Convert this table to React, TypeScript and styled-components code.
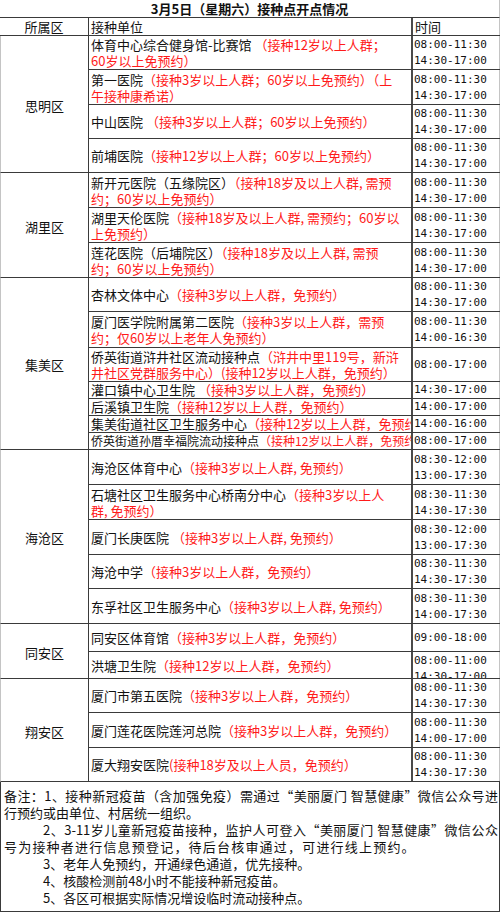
import styled, { createGlobalStyle } from "styled-components";

type Line = [string, string];

interface Entry {
  h: number;
  lines: Line[];
  times: string[];
  small?: boolean;
}

interface District {
  name: string;
  entries: Entry[];
}

const AM_PM = ["08:00-11:30", "14:30-17:00"];

const districts: District[] = [
  {
    name: "思明区",
    entries: [
      {
        h: 34,
        lines: [
          ["体育中心综合健身馆-比赛馆 ", "（接种12岁以上人群；"],
          ["", "60岁以上免预约）"],
        ],
        times: AM_PM,
      },
      {
        h: 35,
        lines: [
          ["第一医院", "（接种3岁以上人群；60岁以上免预约）（上"],
          ["", "午接种康希诺）"],
        ],
        times: AM_PM,
      },
      {
        h: 34,
        lines: [["中山医院 ", "（接种3岁以上人群；60岁以上免预约）"]],
        times: AM_PM,
      },
      {
        h: 34,
        lines: [["前埔医院", "（接种12岁以上人群；60岁以上免预约）"]],
        times: AM_PM,
      },
    ],
  },
  {
    name: "湖里区",
    entries: [
      {
        h: 35,
        lines: [
          ["新开元医院（五缘院区）", "（接种18岁及以上人群, 需预"],
          ["", "约；60岁以上免预约）"],
        ],
        times: AM_PM,
      },
      {
        h: 35,
        lines: [
          ["湖里天伦医院", "（接种18岁及以上人群, 需预约；60岁以"],
          ["", "上免预约）"],
        ],
        times: AM_PM,
      },
      {
        h: 35,
        lines: [
          ["莲花医院（后埔院区）", "（接种18岁及以上人群, 需预"],
          ["", "约；60岁以上免预约）"],
        ],
        times: AM_PM,
      },
    ],
  },
  {
    name: "集美区",
    entries: [
      {
        h: 34,
        lines: [["杏林文体中心", "（接种3岁以上人群，免预约）"]],
        times: AM_PM,
      },
      {
        h: 36,
        lines: [
          ["厦门医学院附属第二医院", "（接种3岁以上人群，需预"],
          ["", "约；仅60岁以上老年人免预约）"],
        ],
        times: ["08:00-11:30", "14:00-16:30"],
      },
      {
        h: 34,
        lines: [
          ["侨英街道浒井社区流动接种点", "（浒井中里119号，新浒"],
          ["", "井社区党群服务中心）(接种12岁以上人群，免预约）"],
        ],
        times: ["08:00-17:00"],
      },
      {
        h: 17,
        lines: [["灌口镇中心卫生院 ", "（接种3岁以上人群，免预约）"]],
        times: ["14:30-17:00"],
      },
      {
        h: 17,
        lines: [["后溪镇卫生院", "（接种12岁以上人群，免预约）"]],
        times: ["14:00-17:00"],
      },
      {
        h: 17,
        lines: [["集美街道社区卫生服务中心", "（接种12岁以上人群，免预约）"]],
        times: ["14:00-16:00"],
      },
      {
        h: 17,
        small: true,
        lines: [["侨英街道孙厝幸福院流动接种点", "（接种12岁以上人群，免预约）"]],
        times: ["08:00-17:00"],
      },
    ],
  },
  {
    name: "海沧区",
    entries: [
      {
        h: 35,
        lines: [["海沧区体育中心", "（接种3岁以上人群, 免预约）"]],
        times: ["08:30-12:00", "13:00-17:30"],
      },
      {
        h: 35,
        lines: [
          ["石塘社区卫生服务中心桥南分中心", "（接种3岁以上人"],
          ["", "群, 免预约）"],
        ],
        times: ["08:30-11:30", "14:30-17:30"],
      },
      {
        h: 35,
        lines: [["厦门长庚医院 ", "（接种3岁以上人群, 免预约）"]],
        times: ["08:30-12:00", "13:00-17:30"],
      },
      {
        h: 34,
        lines: [["海沧中学", "（接种3岁以上人群，免预约）"]],
        times: ["08:30-11:30", "14:30-17:30"],
      },
      {
        h: 35,
        lines: [["东孚社区卫生服务中心", "（接种3岁以上人群, 免预约）"]],
        times: ["08:30-11:30", "14:00-17:30"],
      },
    ],
  },
  {
    name: "同安区",
    entries: [
      {
        h: 28,
        lines: [["同安区体育馆", "（接种3岁以上人群，免预约）"]],
        times: ["09:00-18:00"],
      },
      {
        h: 27,
        lines: [["洪塘卫生院", "（接种12岁以上人群，免预约）"]],
        times: ["08:00-11:00", "14:30-17:00"],
      },
    ],
  },
  {
    name: "翔安区",
    entries: [
      {
        h: 34,
        lines: [["厦门市第五医院", "（接种3岁以上人群，免预约）"]],
        times: ["08:00-11:30", "14:30-17:30"],
      },
      {
        h: 35,
        lines: [["厦门莲花医院莲河总院", "（接种3岁以上人群，免预约）"]],
        times: ["08:00-11:30", "14:00-17:00"],
      },
      {
        h: 34,
        lines: [["厦大翔安医院", "(接种18岁及以上人员，免预约）"]],
        times: ["08:00-11:30", "14:30-17:30"],
      },
    ],
  },
];

const notes: { text: string; indent?: boolean; full?: boolean; spread?: number }[] = [
  { text: "备注：1、接种新冠疫苗（含加强免疫）需通过“美丽厦门 智慧健康”微信公众号进", full: true },
  { text: "行预约或由单位、村居统一组织。" },
  { text: "2、3-11岁儿童新冠疫苗接种，监护人可登入“美丽厦门 智慧健康”微信公众", indent: true, full: true },
  { text: "号为接种者进行信息预登记，待后台核审通过，可进行线上预约。", spread: 1.2 },
  { text: "3、老年人免预约，开通绿色通道，优先接种。", indent: true },
  { text: "4、核酸检测前48小时不能接种新冠疫苗。", indent: true },
  { text: "5、各区可根据实际情况增设临时流动接种点。", indent: true },
];

const GlobalStyle = createGlobalStyle`
  html, body {
    margin: 0;
    padding: 0;
    background: #fff;
  }
  body {
    font-family: "Noto Sans CJK SC", "Noto Sans", sans-serif;
    font-size: 13px;
    color: #111;
  }
`;

const Sheet = styled.div`
  width: 500px;
  box-sizing: border-box;
`;

const Title = styled.div`
  height: 18px;
  box-sizing: border-box;
  padding-top: 1px;
  border-bottom: 1px solid #3a3a3a;
  border-right: 1px solid #c4c4c4;
  text-align: center;
  font-weight: bold;
  line-height: 16px;
`;

const HeaderRow = styled.div`
  display: flex;
  height: 18px;
  box-sizing: border-box;
  border-bottom: 1px solid #3a3a3a;
`;

const HeadCell = styled.div<{ $w: number; $center?: boolean; $edge?: string }>`
  width: ${(p) => p.$w}px;
  box-sizing: border-box;
  line-height: 16px;
  padding-top: 1px;
  padding-left: ${(p) => (p.$center ? 0 : 2)}px;
  text-align: ${(p) => (p.$center ? "center" : "left")};
  border-right: ${(p) => p.$edge || "1px solid #3a3a3a"};
`;

const DistrictBlock = styled.div`
  display: flex;
`;

const DistrictName = styled.div`
  width: 89px;
  box-sizing: border-box;
  border-left: 1px solid #c4c4c4;
  border-right: 1px solid #3a3a3a;
  border-bottom: 1px solid #3a3a3a;
  display: flex;
  align-items: center;
  justify-content: center;
  padding-top: 3px;
  line-height: 16px;
`;

const Entries = styled.div`
  display: flex;
  flex-direction: column;
  width: 411px;
`;

const EntryRow = styled.div<{ $h: number }>`
  display: flex;
  height: ${(p) => p.$h}px;
  box-sizing: border-box;
  border-bottom: 1px solid #3a3a3a;
`;

const NameCell = styled.div<{ $small?: boolean; $tight?: boolean }>`
  width: 324px;
  box-sizing: border-box;
  border-right: 2px solid #4a4a4a;
  padding: ${(p) => (p.$tight ? 0 : 1)}px 0 0 2px;
  overflow: hidden;
  display: flex;
  flex-direction: column;
  justify-content: safe center;
  white-space: nowrap;
  font-size: ${(p) => (p.$small ? 12 : 13)}px;
  line-height: 16px;
`;

const TimeCell = styled.div<{ $tight?: boolean }>`
  width: 87px;
  box-sizing: border-box;
  border-right: 1px solid #c4c4c4;
  padding: ${(p) => (p.$tight ? 0 : 1)}px 0 0 1px;
  overflow: hidden;
  display: flex;
  flex-direction: column;
  justify-content: safe center;
  white-space: nowrap;
  font-family: "DejaVu Sans Mono", "Liberation Mono", monospace;
  font-size: 11px;
  line-height: 16px;
  color: #111;
`;

const Red = styled.span`
  color: #ff1a1a;
`;

const Notes = styled.div`
  height: 130px;
  box-sizing: border-box;
  border: 1px solid #3a3a3a;
  border-top: none;
  padding: 5px 1px 0 3px;
  line-height: 17px;
`;

const NoteLine = styled.div<{ $indent?: boolean; $full?: boolean; $spread?: number }>`
  padding-left: ${(p) => (p.$indent ? 39 : 0)}px;
  text-align: ${(p) => (p.$full ? "justify" : "left")};
  text-align-last: ${(p) => (p.$full ? "justify" : "auto")};
  white-space: ${(p) => (p.$full ? "normal" : "nowrap")};
  letter-spacing: ${(p) => p.$spread || 0}px;
`;

export default function App() {
  return (
    <>
      <GlobalStyle />
      <Sheet>
        <Title>3月5日（星期六）接种点开点情况</Title>
        <HeaderRow>
          <HeadCell $w={89} $center>
            所属区
          </HeadCell>
          <HeadCell $w={324} $edge="2px solid #4a4a4a">
            接种单位
          </HeadCell>
          <HeadCell $w={87} $edge="1px solid #c4c4c4">
            时间
          </HeadCell>
        </HeaderRow>
        {districts.map((d) => (
          <DistrictBlock key={d.name}>
            <DistrictName>{d.name}</DistrictName>
            <Entries>
              {d.entries.map((e, i) => {
                const tight = e.h <= 17;
                return (
                  <EntryRow key={i} $h={e.h}>
                    <NameCell $small={e.small} $tight={tight}>
                      {e.lines.map(([black, red], j) => (
                        <div key={j}>
                          {black}
                          <Red>{red}</Red>
                        </div>
                      ))}
                    </NameCell>
                    <TimeCell $tight={tight}>
                      {e.times.map((t) => (
                        <div key={t}>{t}</div>
                      ))}
                    </TimeCell>
                  </EntryRow>
                );
              })}
            </Entries>
          </DistrictBlock>
        ))}
        <Notes>
          {notes.map((n, i) => (
            <NoteLine key={i} $indent={n.indent} $full={n.full} $spread={n.spread}>
              {n.text}
            </NoteLine>
          ))}
        </Notes>
      </Sheet>
    </>
  );
}
